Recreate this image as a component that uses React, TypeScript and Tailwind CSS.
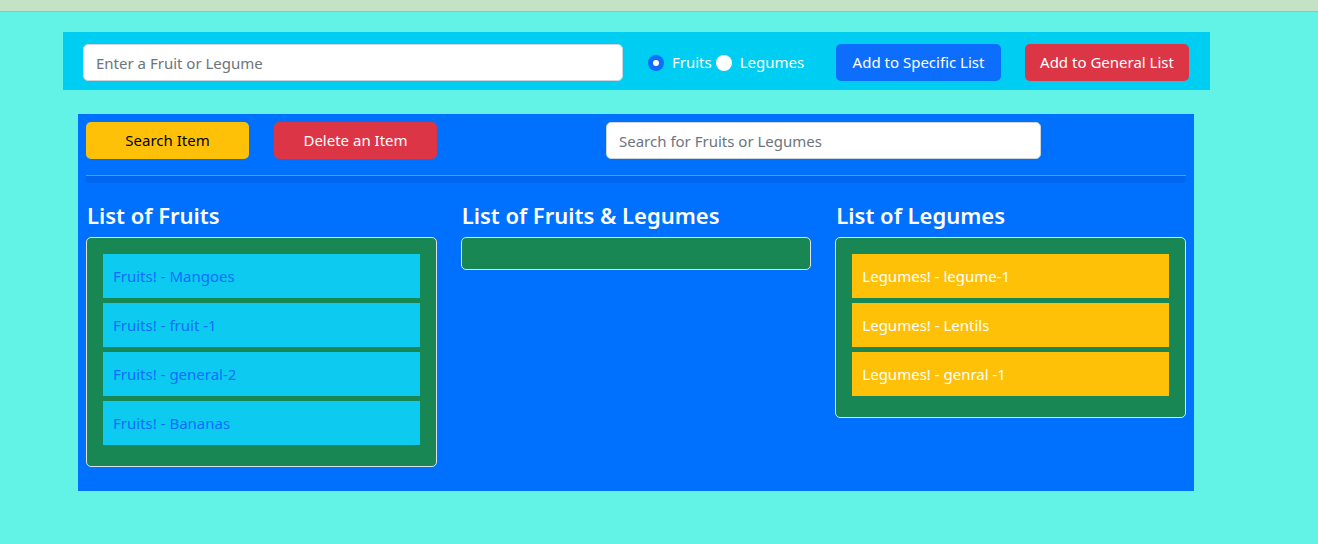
import React from "react";

const font = { fontFamily: '"Noto Sans", "Open Sans", sans-serif' };

function Item({ text, kind }: { text: string; kind: "fruit" | "legume" }) {
  return (
    <li
      className={
        "h-[44px] mb-[5px] flex items-center pl-[10px] text-[15px] " +
        (kind === "fruit" ? "bg-[#0dcaf0] text-[#0d6efd]" : "bg-[#ffc107] text-white")
      }
    >
      {text}
    </li>
  );
}

function Column({ title, items, kind }: { title: string; items: string[]; kind: "fruit" | "legume" }) {
  return (
    <div className="flex flex-col">
      <h4 className="text-[22px] font-semibold text-white leading-[28px] h-[28px] mb-[8px] pl-[1px]">{title}</h4>
      <ul
        className={
          "bg-[#198754] border border-[#dee2e6] rounded-[5px] px-[16px] pt-[16px] " +
          (items.length ? "pb-[16px]" : "h-[33px]")
        }
      >
        {items.map((t) => (
          <Item key={t} text={t} kind={kind} />
        ))}
      </ul>
    </div>
  );
}

export default function App() {
  return (
    <div className="min-h-[544px] bg-[#63f2e6] relative" style={font}>
      <div className="h-[12px] bg-[#c4e3c6] border-b border-[#a9b9aa]" />
      <div className="pt-[20px] pl-[63px]">
        <div className="w-[1147px] h-[58px] bg-[#00cdf2] flex items-start pt-[12px] pl-[20px]">
          <input
            className="w-[540px] h-[37px] bg-white rounded-[5px] border border-[#ced4da] px-[12px] text-[15px] outline-none placeholder:text-[#6c757d]"
            placeholder="Enter a Fruit or Legume"
            style={font}
          />
          <div className="flex items-center h-[37px] ml-[25px] w-[155px] shrink-0 text-white text-[15px]">
            <span className="w-[16px] h-[16px] rounded-full bg-[#0d6efd] flex items-center justify-center shrink-0">
              <span className="w-[6px] h-[6px] rounded-full bg-white" />
            </span>
            <span className="ml-[8px]">Fruits</span>
            <span className="w-[16px] h-[16px] rounded-full bg-white ml-[4px] shrink-0" />
            <span className="ml-[8px]">Legumes</span>
          </div>
          <button className="ml-[33px] w-[165px] shrink-0 h-[37px] bg-[#0d6efd] text-white rounded-[5px] text-[15px]">
            Add to Specific List
          </button>
          <button className="ml-[24px] w-[164px] shrink-0 h-[37px] bg-[#dc3545] text-white rounded-[5px] text-[15px]">
            Add to General List
          </button>
        </div>
        <div className="mt-[24px] ml-[15px] w-[1116px] h-[377px] bg-[#0070ff] px-[8px] pt-[8px]">
          <div className="flex items-center h-[37px]">
            <button className="w-[163px] h-[37px] bg-[#ffc107] text-black rounded-[5px] text-[15px]">Search Item</button>
            <button className="ml-[25px] w-[163px] h-[37px] bg-[#dc3545] text-white rounded-[5px] text-[15px]">
              Delete an Item
            </button>
            <input
              className="ml-[169px] w-[435px] h-[37px] bg-white rounded-[5px] border border-[#ced4da] px-[12px] text-[15px] outline-none placeholder:text-[#6c757d]"
              placeholder="Search for Fruits or Legumes"
              style={font}
            />
          </div>
          <div className="mt-[16px] w-[1100px] border-t border-[#4d9aff] h-[8px] bg-[#0066ee]" />
          <div className="mt-[18px] grid grid-cols-3 gap-[24px] w-[1100px]">
            <Column
              title="List of Fruits"
              kind="fruit"
              items={["Fruits! - Mangoes", "Fruits! - fruit -1", "Fruits! - general-2", "Fruits! - Bananas"]}
            />
            <Column title="List of Fruits & Legumes" kind="fruit" items={[]} />
            <Column
              title="List of Legumes"
              kind="legume"
              items={["Legumes! - legume-1", "Legumes! - Lentils", "Legumes! - genral -1"]}
            />
          </div>
        </div>
      </div>
    </div>
  );
}
